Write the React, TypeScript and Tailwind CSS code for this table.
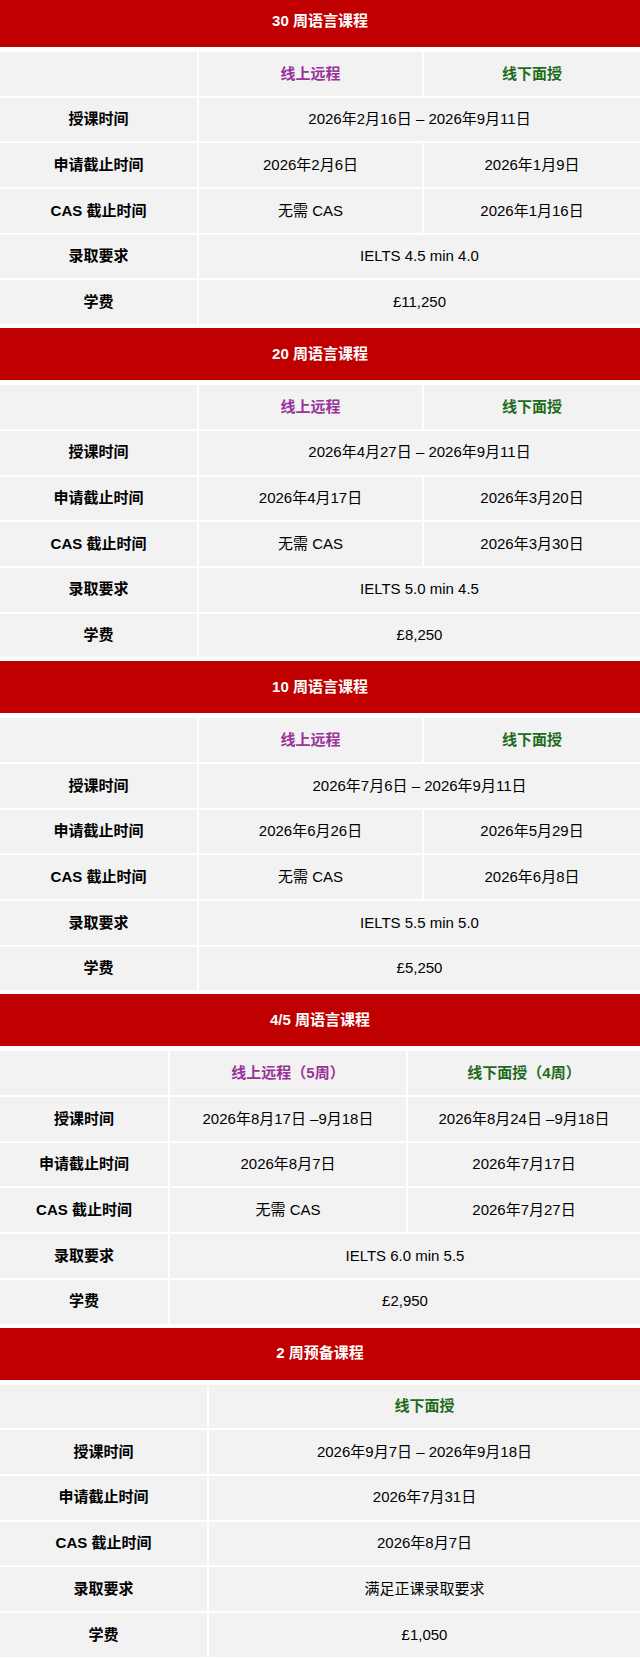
import React from "react";

type Section = {
  title: string;
  cols: string[]; // width classes for each column
  heads: { text: string; color: string }[];
  rows: { label: string; values: string[] }[];
};

const font = "font-['Liberation_Sans','Noto_Sans_CJK_SC',sans-serif]";

const PURPLE = "text-[#993399]";
const GREEN = "text-[#1f6b21]";

const sections: Section[] = [
  {
    title: "30 周语言课程",
    cols: ["w-[197px]", "w-[223px]", "flex-1"],
    heads: [
      { text: "线上远程", color: PURPLE },
      { text: "线下面授", color: GREEN },
    ],
    rows: [
      { label: "授课时间", values: ["2026年2月16日 – 2026年9月11日"] },
      { label: "申请截止时间", values: ["2026年2月6日", "2026年1月9日"] },
      { label: "CAS 截止时间", values: ["无需 CAS", "2026年1月16日"] },
      { label: "录取要求", values: ["IELTS 4.5 min 4.0"] },
      { label: "学费", values: ["£11,250"] },
    ],
  },
  {
    title: "20 周语言课程",
    cols: ["w-[197px]", "w-[223px]", "flex-1"],
    heads: [
      { text: "线上远程", color: PURPLE },
      { text: "线下面授", color: GREEN },
    ],
    rows: [
      { label: "授课时间", values: ["2026年4月27日 – 2026年9月11日"] },
      { label: "申请截止时间", values: ["2026年4月17日", "2026年3月20日"] },
      { label: "CAS 截止时间", values: ["无需 CAS", "2026年3月30日"] },
      { label: "录取要求", values: ["IELTS 5.0 min 4.5"] },
      { label: "学费", values: ["£8,250"] },
    ],
  },
  {
    title: "10 周语言课程",
    cols: ["w-[197px]", "w-[223px]", "flex-1"],
    heads: [
      { text: "线上远程", color: PURPLE },
      { text: "线下面授", color: GREEN },
    ],
    rows: [
      { label: "授课时间", values: ["2026年7月6日 – 2026年9月11日"] },
      { label: "申请截止时间", values: ["2026年6月26日", "2026年5月29日"] },
      { label: "CAS 截止时间", values: ["无需 CAS", "2026年6月8日"] },
      { label: "录取要求", values: ["IELTS 5.5 min 5.0"] },
      { label: "学费", values: ["£5,250"] },
    ],
  },
  {
    title: "4/5 周语言课程",
    cols: ["w-[168px]", "w-[236px]", "flex-1"],
    heads: [
      { text: "线上远程（5周）", color: PURPLE },
      { text: "线下面授（4周）", color: GREEN },
    ],
    rows: [
      { label: "授课时间", values: ["2026年8月17日 –9月18日", "2026年8月24日 –9月18日"] },
      { label: "申请截止时间", values: ["2026年8月7日", "2026年7月17日"] },
      { label: "CAS 截止时间", values: ["无需 CAS", "2026年7月27日"] },
      { label: "录取要求", values: ["IELTS 6.0 min 5.5"] },
      { label: "学费", values: ["£2,950"] },
    ],
  },
  {
    title: "2 周预备课程",
    cols: ["w-[207px]", "flex-1"],
    heads: [{ text: "线下面授", color: GREEN }],
    rows: [
      { label: "授课时间", values: ["2026年9月7日 – 2026年9月18日"] },
      { label: "申请截止时间", values: ["2026年7月31日"] },
      { label: "CAS 截止时间", values: ["2026年8月7日"] },
      { label: "录取要求", values: ["满足正课录取要求"] },
      { label: "学费", values: ["£1,050"] },
    ],
  },
];

function CourseTable({ section }: { section: Section }) {
  const [labelCol, ...valueCols] = section.cols;
  return (
    <section className="pb-[4px]">
      <div className="flex h-[52px] items-center justify-center bg-[#c00000] text-[15px] font-bold text-white">
        {section.title}
      </div>
      <div className="mt-[5px] flex flex-col gap-[2px]">
        <div className="flex h-[43.7px] gap-[2px]">
          <div className={`${labelCol} bg-[#f2f2f2]`} />
          {section.heads.map((h, i) => (
            <div
              key={h.text}
              className={`${valueCols[i]} flex items-center justify-center bg-[#f2f2f2] text-[15px] font-bold ${h.color}`}
            >
              {h.text}
            </div>
          ))}
        </div>
        {section.rows.map((row) => {
          const merged = row.values.length === 1;
          return (
            <div key={row.label} className="flex h-[43.7px] gap-[2px]">
              <div
                className={`${labelCol} flex items-center justify-center bg-[#f2f2f2] text-[15px] font-bold text-black`}
              >
                {row.label}
              </div>
              {merged ? (
                <div className="flex flex-1 items-center justify-center bg-[#f2f2f2] text-[15px] text-black">
                  {row.values[0]}
                </div>
              ) : (
                row.values.map((v, i) => (
                  <div
                    key={i}
                    className={`${valueCols[i]} flex items-center justify-center bg-[#f2f2f2] text-[15px] text-black`}
                  >
                    {v}
                  </div>
                ))
              )}
            </div>
          );
        })}
      </div>
    </section>
  );
}

export default function App() {
  return (
    <div className={`h-[1659px] w-[640px] overflow-hidden bg-white ${font}`}>
      <div className="-mt-[5px]">
        {sections.map((s) => (
          <CourseTable key={s.title} section={s} />
        ))}
      </div>
    </div>
  );
}
